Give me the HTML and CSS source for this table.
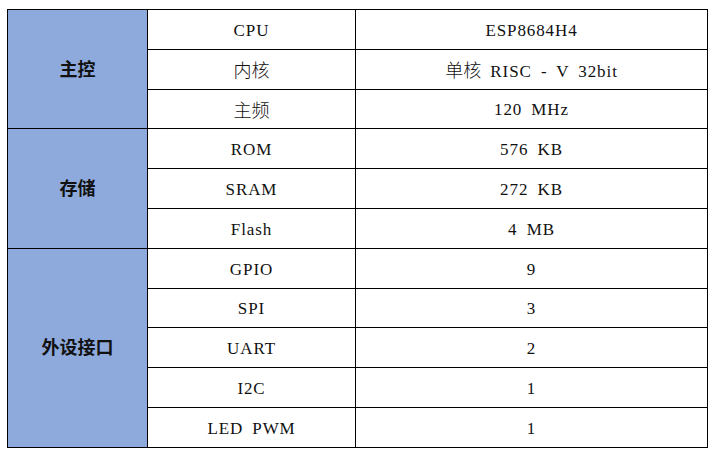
FILE: index.html
```html
<!DOCTYPE html>
<html lang="zh">
<head>
<meta charset="utf-8">
<link rel="stylesheet" href="styles.css">
</head>
<body>
<table class="spec">
  <tr><th class="group" rowspan="3"><span class="zh">主控</span></th><td class="key">CPU</td><td class="val">ESP8684H4</td></tr>
  <tr><td class="key"><span class="zh">内核</span></td><td class="val"><span class="zh">单核</span> RISC - V 32bit</td></tr>
  <tr><td class="key"><span class="zh">主频</span></td><td class="val">120 MHz</td></tr>
  <tr><th class="group" rowspan="3"><span class="zh">存储</span></th><td class="key">ROM</td><td class="val">576 KB</td></tr>
  <tr><td class="key">SRAM</td><td class="val">272 KB</td></tr>
  <tr><td class="key">Flash</td><td class="val">4 MB</td></tr>
  <tr><th class="group" rowspan="5"><span class="zh">外设接口</span></th><td class="key">GPIO</td><td class="val">9</td></tr>
  <tr><td class="key">SPI</td><td class="val">3</td></tr>
  <tr><td class="key">UART</td><td class="val">2</td></tr>
  <tr><td class="key">I2C</td><td class="val">1</td></tr>
  <tr><td class="key">LED PWM</td><td class="val">1</td></tr>
</table>
</body>
</html>
```
FILE: styles.css
```css
html, body {
  margin: 0;
  padding: 0;
  background: #ffffff;
}
body {
  padding: 9px 0 0 7px;
}
.spec {
  border-collapse: collapse;
  table-layout: fixed;
  width: 701px;
  font-family: "Liberation Serif", "Noto Sans CJK SC", serif;
  font-size: 17px;
  letter-spacing: 0.9px;
  word-spacing: 4px;
  color: #111;
}
.spec td, .spec th {
  border: 1px solid #000;
  text-align: center;
  vertical-align: middle;
  padding: 3px 0 0;
  height: 35.8px;
  line-height: 20px;
}
.spec .group {
  width: 139px;
  background: #8eaadc;
  font-weight: bold;
  padding-top: 0;
}
.spec .key {
  width: 207px;
}
.spec .val {
  width: 351px;
}
.zh {
  font-family: "Noto Sans CJK SC", sans-serif;
  font-size: 18px;
  font-weight: 300;
  letter-spacing: 0;
  word-spacing: 0;
}
.group .zh {
  font-weight: 700;
}
```
